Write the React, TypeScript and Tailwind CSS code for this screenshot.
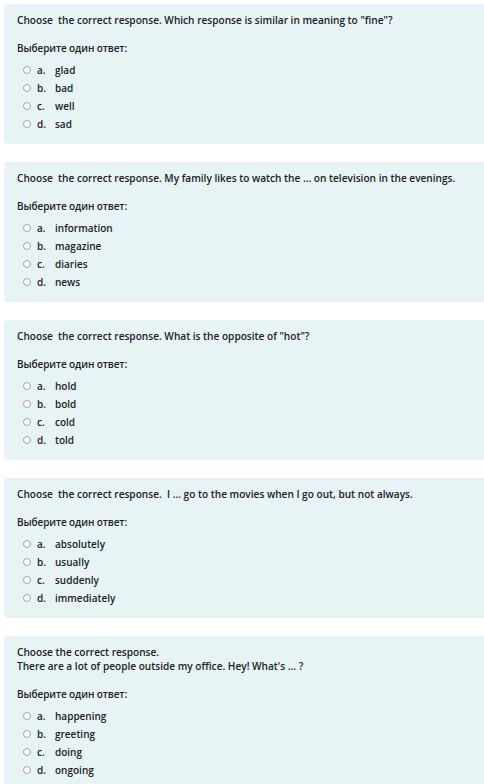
import React from "react";

type Q = { lines: string[]; options: string[] };

const questions: Q[] = [
  {
    lines: ["Choose\u00a0 the correct response. Which response is similar in meaning to \"fine\"?"],
    options: ["glad", "bad", "well", "sad"],
  },
  {
    lines: ["Choose\u00a0 the correct response. My family likes to watch the ... on television in the evenings."],
    options: ["information", "magazine", "diaries", "news"],
  },
  {
    lines: ["Choose\u00a0 the correct response. What is the opposite of \"hot\"?"],
    options: ["hold", "bold", "cold", "told"],
  },
  {
    lines: ["Choose\u00a0 the correct response.\u00a0 I ... go to the movies when I go out, but not always."],
    options: ["absolutely", "usually", "suddenly", "immediately"],
  },
  {
    lines: ["Choose the correct response.", "There are a lot of people outside my office. Hey! What's ... ?"],
    options: ["happening", "greeting", "doing", "ongoing"],
  },
];

const letters = ["a.", "b.", "c.", "d."];

function Card({ q }: { q: Q }) {
  return (
    <div className="ml-[4px] w-[500px] rounded-[4px] bg-[#e7f3f5] pt-[9px] pb-[11px] pl-[13px]">
      <div className="text-[10.1px] leading-[14px] font-semibold text-[#1d2125]">
        {q.lines.map((l, i) => (
          <div key={i}>{l}</div>
        ))}
      </div>
      <div className="mt-[14px] text-[10px] leading-[14px] font-semibold tracking-[-0.1px] text-[#1d2125]">Выберите один ответ:</div>
      <div className="mt-[6px] flex flex-col">
        {q.options.map((o, i) => (
          <div key={i} className="flex h-[18px] items-center text-[10px] font-semibold text-[#1d2125]">
            <span className="ml-[6px] box-border h-[8px] w-[8px] rounded-full border border-[#a0a4a8] bg-white" />
            <span className="ml-[6px] w-[18px]">{letters[i]}</span>
            <span>{o}</span>
          </div>
        ))}
      </div>
    </div>
  );
}

export default function App() {
  return (
    <div
      className="h-[784px] w-[484px] overflow-hidden bg-white pt-[4px]"
      style={{ fontFamily: '"Open Sans", "Noto Sans", sans-serif' }}
    >
      <div className="flex flex-col gap-[18px]">
        {questions.map((q, i) => (
          <Card key={i} q={q} />
        ))}
      </div>
    </div>
  );
}
